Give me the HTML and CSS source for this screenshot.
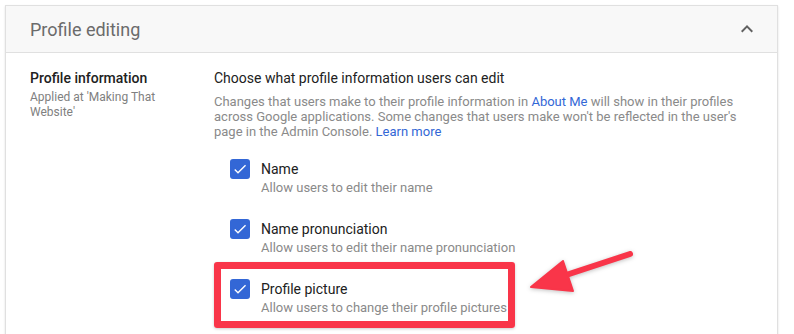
FILE: index.html
```html
<!DOCTYPE html>
<html lang="en">
<head>
  <meta charset="UTF-8">
  <title>Profile editing</title>
  <link rel="stylesheet" href="styles.css">
</head>
<body>
  <!-- settings card -->
  <div class="card">
    <div class="card-head">
      <div class="card-title">Profile editing</div>
      <svg class="chevron" viewBox="0 0 24 24" width="24" height="24">
        <path d="M12 8l-6 6 1.41 1.41L12 10.83l4.59 4.58L18 14z" />
      </svg>
    </div>

    <div class="card-body">
      <div class="side">
        <div class="side-title">Profile information</div>
        <div class="side-sub">Applied at 'Making That Website'</div>
      </div>

      <div class="main">
        <div class="main-title">Choose what profile information users can edit</div>
        <div class="main-desc">
          Changes that users make to their profile information in <a href="#">About Me</a> will show in their profiles
          across Google applications. Some changes that users make won't be reflected in the user's
          page in the Admin Console. <a href="#">Learn more</a>
        </div>

        <div class="options">
          <div class="option">
            <span class="check">
              <svg viewBox="0 0 24 24" width="16" height="16"><path d="M9 16.17L4.83 12l-1.42 1.41L9 19 21 7l-1.41-1.41z" /></svg>
            </span>
            <div class="option-text">
              <div class="option-label">Name</div>
              <div class="option-sub">Allow users to edit their name</div>
            </div>
          </div>
          <div class="option">
            <span class="check">
              <svg viewBox="0 0 24 24" width="16" height="16"><path d="M9 16.17L4.83 12l-1.42 1.41L9 19 21 7l-1.41-1.41z" /></svg>
            </span>
            <div class="option-text">
              <div class="option-label">Name pronunciation</div>
              <div class="option-sub">Allow users to edit their name pronunciation</div>
            </div>
          </div>
          <!-- highlighted by the red box -->
          <div class="option marked">
            <span class="check">
              <svg viewBox="0 0 24 24" width="16" height="16"><path d="M9 16.17L4.83 12l-1.42 1.41L9 19 21 7l-1.41-1.41z" /></svg>
            </span>
            <div class="option-text">
              <div class="option-label">Profile picture</div>
              <div class="option-sub">Allow users to change their profile pictures</div>
            </div>
          </div>
        </div>
      </div>
    </div>
  </div>

  <!-- red annotation arrow -->
  <svg class="arrow" viewBox="0 0 794 334" width="794" height="334">
    <line x1="630" y1="254" x2="560" y2="277" />
    <polygon points="531,287 563,261 573,291" />
  </svg>
</body>
</html>
```

FILE: styles.css
```css
body {
  margin: 0;
  font-family: Roboto, "Liberation Sans", sans-serif;
  background: #fff;
  color: #212121;
  overflow: hidden;
}

.card {
  margin: 5px 0 0 5px;
  width: 771px;
  height: 340px;
  border: 1px solid #e0e0e0;
  box-shadow: 0 1px 2px rgba(0,0,0,0.12);
  background: #fff;
}

.card-head {
  height: 46px;
  background: #f8f8f8;
  border-bottom: 1px solid #e0e0e0;
  display: flex;
  align-items: center;
  justify-content: space-between;
  padding: 0 18px 0 24px;
}
.card-title {
  font-size: 18px;
  color: #6b6b6b;
}
.chevron path {
  fill: #616161;
}

.card-body {
  display: flex;
  padding: 15px 0 0 24px;
}

/* left column */
.side {
  width: 184px;
  flex: none;
}
.side-title {
  font-size: 14px;
  font-weight: 500;
  line-height: 20px;
}
.side-sub {
  font-size: 12px;
  line-height: 15px;
  color: #808080;
  margin-top: 2px;
  width: 150px;
}

/* right column */
.main-title {
  font-size: 14px;
  line-height: 20px;
  color: #212121;
}
.main-desc {
  margin-top: 6px;
  font-size: 13px;
  line-height: 15px;
  color: #8a8a8a;
  width: 530px;
}
.main-desc a {
  color: #3367d6;
  text-decoration: none;
}

.options {
  margin-top: 20px;
  padding-left: 16px;
  display: flex;
  flex-direction: column;
  gap: 22px;
}
.option {
  display: flex;
  gap: 11px;
  position: relative;
}
.check {
  width: 20px;
  height: 20px;
  border-radius: 3px;
  background: #3367d6;
  display: flex;
  align-items: center;
  justify-content: center;
  flex: none;
}
.check path {
  fill: #fff;
}
.option-label {
  font-size: 14px;
  line-height: 20px;
  color: #212121;
}
.option-sub {
  font-size: 13px;
  line-height: 18px;
  color: #8a8a8a;
}

/* red highlight box */
.option.marked::after {
  content: "";
  position: absolute;
  left: -16px;
  top: -17px;
  width: 287px;
  height: 52px;
  border: 7px solid #f93549;
  border-radius: 3px;
  box-shadow: 0 1px 3px rgba(0,0,0,0.2);
}

.arrow {
  position: absolute;
  left: 0;
  top: 0;
  pointer-events: none;
  filter: drop-shadow(0 1px 2px rgba(0,0,0,0.25));
}
.arrow line {
  stroke: #f93549;
  stroke-width: 6;
  stroke-linecap: round;
}
.arrow polygon {
  fill: #f93549;
  stroke: #f93549;
  stroke-width: 2;
  stroke-linejoin: round;
}
```
